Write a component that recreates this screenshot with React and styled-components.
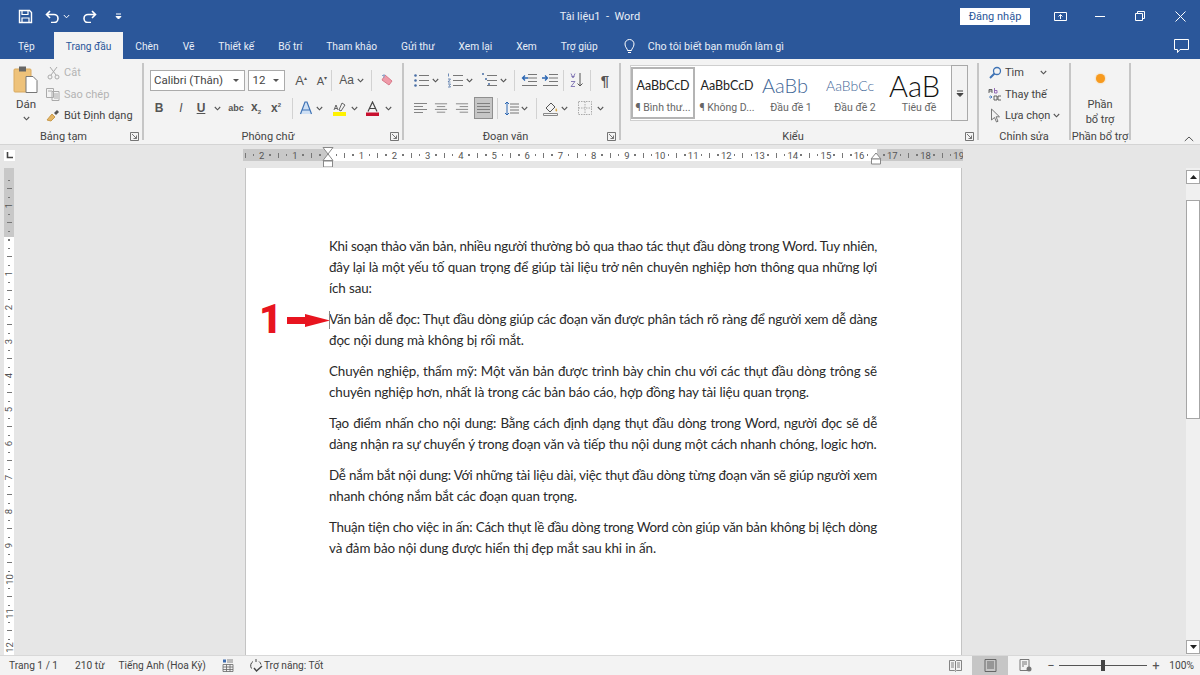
import React from "react";
import styled, { createGlobalStyle } from "styled-components";

const Global = createGlobalStyle`
    html, body {
        margin: 0;
        padding: 0;
        height: 100%;
        overflow: hidden;
    }
    #root {
        height: 100%;
    }
`;

const Screen = styled.div`
    width: 1200px;
    height: 675px;
    display: flex;
    flex-direction: column;
    background: #e6e6e6;
    font-family: "Roboto", "Noto Sans", sans-serif;
    color: #444;
    overflow: hidden;
`;

const TitleBar = styled.div`
    height: 32px;
    flex: none;
    display: grid;
    grid-template-columns: 1fr auto 1fr;
    align-items: center;
    background: #2b579a;
    color: #fff;
`;

const Quick = styled.div`
    display: flex;
    align-items: center;
    padding-left: 17px;
`;

const QuickBtn = styled.div`
    width: ${(p) => p.$w}px;
    margin-left: ${(p) => p.$ml || 0}px;
    display: flex;
    justify-content: center;
    align-items: center;
`;

const DocTitle = styled.div`
    font-size: 11px;
    color: #e8eef7;
`;

const WindowBar = styled.div`
    display: flex;
    align-items: center;
    justify-content: flex-end;
`;

const SignIn = styled.div`
    width: 70px;
    height: 17px;
    margin-right: 10px;
    background: #fff;
    color: #2b579a;
    font-size: 11px;
    line-height: 18px;
    text-align: center;
`;

const WinBtn = styled.div`
    width: 40px;
    display: flex;
    justify-content: center;
    align-items: center;
`;

const TabBar = styled.div`
    height: 27px;
    flex: none;
    display: flex;
    align-items: stretch;
    padding-left: 6px;
    background: #2b579a;
    color: #e8eef7;
    font-size: 10.2px;
`;

const Tab = styled.div`
    padding: 2px 12px 0;
    margin-right: ${(p) => p.$mr || 0}px;
    display: flex;
    align-items: center;
    ${(p) => p.$active && "background: #f3f3f3; color: #2b579a;"}
`;

const TellMe = styled.div`
    display: flex;
    align-items: center;
    gap: 12px;
    margin-left: 13px;
    padding-top: 1px;
    font-size: 10.7px;
`;

const CommentBtn = styled.div`
    margin-left: auto;
    margin-right: 11px;
    display: flex;
    align-items: center;
`;

const Ribbon = styled.div`
    height: 86px;
    flex: none;
    position: relative;
    box-sizing: border-box;
    display: flex;
    padding: 4px 0;
    background: #f3f3f3;
    border-bottom: 1px solid #d4d4d4;
    font-size: 11px;
`;

const Group = styled.div`
    width: ${(p) => p.$w}px;
    flex: none;
    position: relative;
    box-sizing: border-box;
    display: flex;
    flex-direction: column;
    border-right: 2px solid #c6c6c6;
`;

const GroupBody = styled.div`
    flex: 1;
    display: flex;
    flex-direction: ${(p) => (p.$row ? "row" : "column")};
    padding-top: ${(p) => p.$pt || 0}px;
    padding-left: ${(p) => p.$pl || 0}px;
    gap: ${(p) => p.$gap || 0}px;
`;

const GroupLabel = styled.div`
    height: 14px;
    margin-bottom: -4px;
    line-height: 14px;
    text-align: center;
    padding-right: ${(p) => p.$pr || 0}px;
    white-space: nowrap;
`;

const Launcher = styled.svg`
    position: absolute;
    right: 3px;
    bottom: -1px;
    width: 9px;
    height: 9px;
`;

const ToolRow = styled.div`
    height: 22px;
    display: flex;
    align-items: center;
`;

const Tool = styled.div`
    width: ${(p) => p.$w}px;
    margin-left: ${(p) => p.$ml || 0}px;
    flex: none;
    display: flex;
    align-items: center;
    justify-content: center;
    ${(p) => p.$on && "height: 22px; box-sizing: border-box; background: #c6c6c6; border: 1px solid #8f8f8f;"}
`;

const Sep = styled.div`
    width: 1px;
    height: 21px;
    margin-left: ${(p) => p.$ml || 0}px;
    background: #d2d2d2;
    flex: none;
`;

const Caret = styled.svg`
    width: 7px;
    height: 5px;
    flex: none;
`;

const FontBox = styled.div`
    width: ${(p) => p.$w}px;
    height: 21px;
    margin-left: ${(p) => p.$ml || 0}px;
    box-sizing: border-box;
    display: flex;
    align-items: center;
    justify-content: space-between;
    padding: 0 5px 0 3px;
    background: #fff;
    border: 1px solid #ababab;
    font-family: "Roboto", sans-serif;
    font-size: 11.5px;
`;

const SmallArrow = styled.div`
    width: 0;
    height: 0;
    border-left: 3px solid transparent;
    border-right: 3px solid transparent;
    border-top: 3px solid #555;
`;

const GlyphBtn = styled.span`
    font-family: "Liberation Sans", sans-serif;
    font-size: ${(p) => p.$size || 12}px;
    font-weight: ${(p) => (p.$bold ? 700 : 400)};
    font-style: ${(p) => (p.$italic ? "italic" : "normal")};
    text-decoration: ${(p) => (p.$under ? "underline" : "none")};
    color: #555;
    white-space: nowrap;
`;

const Sub = styled.sub`
    font-size: 6px;
`;

const Sup = styled.sup`
    font-size: 6px;
`;

const PasteCol = styled.div`
    width: 40px;
    margin-left: 6px;
    display: flex;
    flex-direction: column;
    align-items: center;
    padding-top: 2px;
    font-size: 11.5px;
`;

const PasteText = styled.div`
    margin-top: 3px;
    line-height: 14px;
`;

const PasteDown = styled.div`
    line-height: 10px;
    margin-top: 1px;
`;

const SmallCol = styled.div`
    display: flex;
    flex-direction: column;
    margin-top: -1px;
`;

const SmallItem = styled.div`
    height: 21.5px;
    display: flex;
    align-items: center;
    gap: ${(p) => p.$gap || 4}px;
    color: ${(p) => (p.$off ? "#b4b4b4" : "#444")};
    white-space: nowrap;
`;

const ItemIcon = styled.div`
    width: 14px;
    display: flex;
    justify-content: center;
    flex: none;
`;

const Gallery = styled.div`
    width: 338px;
    height: 56px;
    margin: 2px 0 0 9px;
    box-sizing: border-box;
    display: flex;
    background: #fff;
    border: 1px solid #cfcfcf;
`;

const StyleCard = styled.div`
    width: 64px;
    flex: none;
    box-sizing: border-box;
    display: flex;
    flex-direction: column;
    align-items: center;
    overflow: hidden;
    margin: 1px 0;
    border: 2px solid ${(p) => (p.$on ? "#b4b4b4" : "transparent")};
`;

const StylePreview = styled.div`
    height: 32px;
    width: 56px;
    position: relative;
    left: ${(p) => p.$shift || 0}px;
    display: flex;
    align-items: center;
    justify-content: ${(p) => (p.$left ? "flex-start" : "center")};
    font-family: "Lato", sans-serif;
    font-size: ${(p) => p.$size || 13}px;
    font-weight: ${(p) => (p.$thin ? 300 : 400)};
    color: ${(p) => p.$color || "#222"};
    white-space: nowrap;
`;

const StyleName = styled.div`
    font-size: 10.5px;
    line-height: 14px;
    color: #666;
    white-space: nowrap;
`;

const GalleryMore = styled.div`
    width: 21px;
    height: 56px;
    margin: -1px -1px -1px auto;
    box-sizing: border-box;
    display: flex;
    align-items: center;
    justify-content: center;
    background: #f3f3f3;
    border: 1px solid #a9a9a9;
`;

const AddinBody = styled.div`
    flex: 1;
    display: flex;
    flex-direction: column;
    align-items: center;
    padding-top: 11px;
    line-height: 14.5px;
    text-align: center;
`;

const OrangeDot = styled.div`
    width: 9px;
    height: 9px;
    margin-bottom: 15px;
    border-radius: 50%;
    background: #f79a1e;
    box-shadow: 0 0 2px #f9b85c;
`;

const Collapse = styled.svg`
    position: absolute;
    right: 6px;
    bottom: 2px;
    width: 10px;
    height: 6px;
`;

const RulerRow = styled.div`
    height: 23px;
    flex: none;
    position: relative;
    display: flex;
    padding-top: 4px;
    box-sizing: border-box;
`;

const Corner = styled.div`
    width: 11px;
    height: 11px;
    margin: 1px 0 0 4px;
    background: #fff;
    color: #444;
    display: flex;
    align-items: center;
    justify-content: center;
    flex: none;
`;

const HRuler = styled.div`
    width: 720px;
    height: 12px;
    margin-left: 228px;
    display: flex;
    overflow: hidden;
    background: linear-gradient(90deg, #c8c8c8 85px, #fff 85px, #fff 634px, #c8c8c8 634px);
`;

const HMark = styled.div`
    width: 8.3px;
    flex: none;
    display: flex;
    align-items: center;
    justify-content: center;
    font-family: "Roboto", sans-serif;
    font-size: 9.5px;
    color: #555;
    position: relative;
    left: -2px;
`;

const Dot = styled.span`
    width: 1.5px;
    height: 1.5px;
    background: #777;
`;

const Tick = styled.span`
    width: ${(p) => (p.$flat ? 5 : 1)}px;
    height: ${(p) => (p.$flat ? 1 : 5)}px;
    background: #777;
`;

const IndentMark = styled.svg`
    position: absolute;
    top: 2px;
    left: ${(p) => p.$x}px;
    width: 12px;
    height: 20px;
`;

const Workspace = styled.div`
    flex: 1;
    min-height: 0;
    display: flex;
`;

const VRuler = styled.div`
    width: 10px;
    margin-left: 4px;
    padding-top: 8px;
    flex: none;
    display: flex;
    flex-direction: column;
    overflow: hidden;
    background: linear-gradient(180deg, #c8c8c8 69px, #fff 69px);
`;

const VMark = styled.div`
    height: 8.5px;
    flex: none;
    display: flex;
    align-items: center;
    justify-content: center;
    font-family: "Roboto", sans-serif;
    font-size: 9.5px;
    color: #555;
`;

const VNum = styled.span`
    display: block;
    transform: rotate(-90deg);
`;

const Desk = styled.div`
    flex: 1;
    min-width: 0;
    padding-left: 231px;
`;

const Page = styled.div`
    width: 717px;
    height: 100%;
    position: relative;
    box-sizing: border-box;
    padding: 68px 0 0 83px;
    background: #fff;
    border-left: 1px solid #c4c4c4;
    border-right: 1px solid #c4c4c4;
    font-family: "Lato", sans-serif;
    font-size: 13.4px;
    color: #2a2a2a;
`;

const Para = styled.div`
    width: 548px;
    margin-bottom: 10.4px;
`;

const Line = styled.div`
    height: 20.8px;
    line-height: 20.8px;
    white-space: nowrap;
    letter-spacing: ${(p) => p.$ls}px;
    text-align: ${(p) => (p.$last ? "left" : "justify")};
    text-align-last: ${(p) => (p.$last ? "left" : "justify")};
`;

const BigOne = styled.div`
    position: absolute;
    left: 13px;
    top: 129px;
    font-family: "Roboto", sans-serif;
    font-size: 40px;
    line-height: 46px;
    font-weight: 900;
    color: #e8141f;
`;

const Arrow = styled.svg`
    position: absolute;
    left: 41px;
    top: 145px;
    width: 44px;
    height: 15px;
`;

const Cursor = styled.div`
    position: absolute;
    left: 83px;
    top: 143px;
    width: 1px;
    height: 18px;
    background: #888;
`;

const ScrollBar = styled.div`
    width: 14px;
    flex: none;
    display: flex;
    flex-direction: column;
    padding-top: 2px;
    box-sizing: border-box;
    background: #f0f0f0;
`;

const ScrollBtn = styled.div`
    height: 14px;
    flex: none;
    box-sizing: border-box;
    background: #fff;
    border: 1px solid #a6a6a6;
    display: flex;
    align-items: center;
    justify-content: center;
    margin-top: ${(p) => (p.$end ? "auto" : 0)};
    margin-bottom: ${(p) => (p.$end ? "1px" : 0)};
`;

const ScrollThumb = styled.div`
    height: 219px;
    margin-top: 16px;
    flex: none;
    box-sizing: border-box;
    background: #fff;
    border: 1px solid #a6a6a6;
`;

const StatusBar = styled.div`
    height: 20px;
    flex: none;
    display: flex;
    align-items: center;
    background: #f3f3f3;
    border-top: 1px solid #d8d8d8;
    box-sizing: border-box;
    font-size: 10.2px;
    padding: 0 6px 0 9px;
    white-space: nowrap;
`;

const StatusItem = styled.div`
    margin-left: ${(p) => (p.$auto ? "auto" : `${p.$ml || 0}px`)};
    display: flex;
    align-items: center;
`;

const ViewBtn = styled.div`
    width: 36px;
    height: 19px;
    margin-left: ${(p) => p.$ml || 0}px;
    display: flex;
    align-items: center;
    justify-content: center;
    ${(p) => p.$on && "background: #c6c6c6;"}
`;

const ZoomSign = styled.div`
    width: 7px;
    text-align: center;
    font-size: 13px;
    line-height: 13px;
    color: #555;
    margin-left: ${(p) => p.$ml || 0}px;
`;

const ZoomTrack = styled.div`
    width: 88px;
    height: 1px;
    margin-left: 5px;
    position: relative;
    background: #555;
`;

const ZoomThumb = styled.div`
    position: absolute;
    left: 42px;
    top: -5px;
    width: 4px;
    height: 11px;
    background: #444;
`;

const Down = () => (
    <Caret viewBox="0 0 7 5">
        <path d="M.8 1 3.5 3.8 6.2 1" fill="none" stroke="#555" strokeWidth="1.1" />
    </Caret>
);

const Ico = ({ w = 16, h = 16, c = "#555", children }) => (
    <svg width={w} height={h} viewBox={`0 0 ${w} ${h}`} fill="none" stroke={c} strokeWidth="1">
        {children}
    </svg>
);

const Launch = () => (
    <Launcher viewBox="0 0 9 9">
        <path d="M.5.5h8v8h-8zM2 2l4.5 4.5M6.5 3.5v3h-3" fill="none" stroke="#666" strokeWidth=".9" />
    </Launcher>
);

const ListIcon = ({ kind }) => (
    <Ico w={17} h={16}>
        {[3, 8, 13].map((y) => (
            <path key={y} d={`M6 ${y}.5h10`} stroke="#777" />
        ))}
        {kind === "bullet" && [3, 8, 13].map((y) => <circle key={y} cx="2.5" cy={y + 0.5} r="1.3" fill="#4a6fa5" stroke="none" />)}
        {kind === "num" && <path d="M1.5 1.5v3M1 7h2.5L1 10h2.5M1 12h2.5l-1 1.5 1 1.5H1" stroke="#4a6fa5" strokeWidth=".8" />}
        {kind === "multi" && <path d="M1 2h2M4 7h2M7 12h2" stroke="#4a6fa5" strokeWidth="1.4" />}
    </Ico>
);

const IndentIcon = ({ dir }) => (
    <Ico w={16} h={14}>
        <path d="M7 1.5h9M7 5h9M7 8.5h9M1 12.5h15" stroke="#777" />
        <path d={dir === "out" ? "M7 5H1.5M4 2.5 1.5 5 4 7.5" : "M0 5h5.5M3 2.5 5.5 5 3 7.5"} stroke="#2a66b3" strokeWidth="1.3" />
    </Ico>
);

const AlignIcon = ({ lines }) => (
    <Ico w={15} h={12}>
        {lines.map(([a, b], i) => (
            <path key={i} d={`M${a} ${i * 3 + 1.5}H${b}`} stroke="#777" strokeWidth=".9" />
        ))}
    </Ico>
);

const rulerMarks = () => {
    const marks = [];
    for (let k = -10; k <= 76; k++) {
        marks.push(k);
    }
    return marks;
};

const markContent = (k, vertical) => {
    const m = ((k % 4) + 4) % 4;
    if (m === 0) {
        const n = Math.abs(k / 4);
        if (n === 0) return <Dot />;
        return vertical ? <VNum>{n}</VNum> : n;
    }
    if (m === 2) return <Tick $flat={vertical} />;
    return <Dot />;
};

const paragraphs = [
    [
        ["Khi soạn thảo văn bản, nhiều người thường bỏ qua thao tác thụt đầu dòng trong Word. Tuy nhiên,", -0.25],
        ["đây lại là một yếu tố quan trọng để giúp tài liệu trở nên chuyên nghiệp hơn thông qua những lợi", -0.14],
        ["ích sau:", -0.12],
    ],
    [
        ["Văn bản dễ đọc: Thụt đầu dòng giúp các đoạn văn được phân tách rõ ràng để người xem dễ dàng", -0.19],
        ["đọc nội dung mà không bị rối mắt.", -0.12],
    ],
    [
        ["Chuyên nghiệp, thẩm mỹ: Một văn bản được trình bày chỉn chu với các thụt đầu dòng trông sẽ", -0.12],
        ["chuyên nghiệp hơn, nhất là trong các bản báo cáo, hợp đồng hay tài liệu quan trọng.", -0.12],
    ],
    [
        ["Tạo điểm nhấn cho nội dung: Bằng cách định dạng thụt đầu dòng trong Word, người đọc sẽ dễ", -0.22],
        ["dàng nhận ra sự chuyển ý trong đoạn văn và tiếp thu nội dung một cách nhanh chóng, logic hơn.", -0.14],
    ],
    [
        ["Dễ nắm bắt nội dung: Với những tài liệu dài, việc thụt đầu dòng từng đoạn văn sẽ giúp người xem", -0.22],
        ["nhanh chóng nắm bắt các đoạn quan trọng.", -0.12],
    ],
    [
        ["Thuận tiện cho việc in ấn: Cách thụt lề đầu dòng trong Word còn giúp văn bản không bị lệch dòng", -0.25],
        ["và đảm bảo nội dung được hiển thị đẹp mắt sau khi in ấn.", -0.12],
    ],
];

const tabs = ["Chèn", "Vẽ", "Thiết kế", "Bố trí", "Tham khảo", "Gửi thư", "Xem lại", "Xem", "Trợ giúp"];

const styleCards = [
    { name: "¶ Bình thư...", text: "AaBbCcD", size: 12.5, on: true },
    { name: "¶ Không D...", text: "AaBbCcD", size: 12.5 },
    { name: "Đầu đề 1", text: "AaBb", size: 20, color: "#3f6797", left: true, thin: true, shift: -1 },
    { name: "Đầu đề 2", text: "AaBbCc", size: 14, color: "#3f6797", left: true, thin: true, shift: -1 },
    { name: "Tiêu đề", text: "AaB", size: 29, color: "#111", left: true, thin: true, shift: -2 },
];

const App = () => {
    return (
        <Screen>
            <Global />
            <TitleBar>
                <Quick>
                    <QuickBtn $w={16}>
                        <Ico w={15} h={15} c="#fff">
                            <path d="M1.5 1.5h10l2 2v10h-12z" strokeWidth="1.4" />
                            <path d="M4 1.5v4h6v-4M4 13.5V9h7v4.5" strokeWidth="1.2" />
                        </Ico>
                    </QuickBtn>
                    <QuickBtn $w={18} $ml={10}>
                        <Ico w={15} h={13} c="#fff">
                            <path d="M5 1 1.5 4.5 5 8M1.5 4.5H9a4 4 0 0 1 0 8H6" strokeWidth="1.6" />
                        </Ico>
                    </QuickBtn>
                    <QuickBtn $w={10}>
                        <Caret viewBox="0 0 7 5">
                            <path d="M.8 1 3.5 3.8 6.2 1" fill="none" stroke="#fff" />
                        </Caret>
                    </QuickBtn>
                    <QuickBtn $w={16} $ml={10}>
                        <Ico w={15} h={13} c="#fff">
                            <path d="M10 1l3.5 3.5L10 8M13.5 4.5H6a4 4 0 0 0 0 8h3" strokeWidth="1.6" />
                        </Ico>
                    </QuickBtn>
                    <QuickBtn $w={8} $ml={17}>
                        <Ico w={7} h={7} c="#fff">
                            <path d="M1 1h5M1 3.5h5L3.5 6z" fill="#fff" />
                        </Ico>
                    </QuickBtn>
                </Quick>
                <DocTitle>Tài liệu1 &nbsp;-&nbsp; Word</DocTitle>
                <WindowBar>
                    <SignIn>Đăng nhập</SignIn>
                    <WinBtn>
                        <Ico w={13} h={11} c="#fff">
                            <path d="M.5 1.5h12v8H.5z" />
                            <path d="M6.5 8V4M4.5 5.5l2-2 2 2" />
                        </Ico>
                    </WinBtn>
                    <WinBtn>
                        <Ico w={10} h={10} c="#fff">
                            <path d="M0 5.5h10" />
                        </Ico>
                    </WinBtn>
                    <WinBtn>
                        <Ico w={10} h={10} c="#fff">
                            <path d="M.5 2.5h7v7h-7zM2.5 2.5v-2h7v7h-2" />
                        </Ico>
                    </WinBtn>
                    <WinBtn>
                        <Ico w={11} h={11} c="#fff">
                            <path d="M.5.5l10 10M10.5.5l-10 10" />
                        </Ico>
                    </WinBtn>
                </WindowBar>
            </TitleBar>

            <TabBar>
                <Tab $mr={7}>Tệp</Tab>
                <Tab $active>Trang đầu</Tab>
                {tabs.map((t) => (
                    <Tab key={t}>{t}</Tab>
                ))}
                <TellMe>
                    <Ico w={13} h={16} c="#fff">
                        <path d="M4.5 12.5c0-2-2.5-3-2.5-6.5a4.5 4.5 0 0 1 9 0c0 3.5-2.5 4.5-2.5 6.5zM5 14.5h3" />
                    </Ico>
                    Cho tôi biết bạn muốn làm gì
                </TellMe>
                <CommentBtn>
                    <Ico w={15} h={15} c="#fff">
                        <path d="M.5 1.5h14v10H6l-2.5 3v-3h-3z" />
                    </Ico>
                </CommentBtn>
            </TabBar>

            <Ribbon>
                <Group $w={144}>
                    <GroupBody $row>
                        <PasteCol>
                            <Ico w={26} h={29} c="#777">
                                <rect x="1" y="4" width="17" height="23" rx="1" fill="#eec27a" stroke="#d9aa60" />
                                <rect x="6" y="1.5" width="7" height="5" fill="#666" stroke="none" />
                                <path d="M13 11.5h7l4 4v12H13z" fill="#fff" stroke="#777" />
                            </Ico>
                            <PasteText>Dán</PasteText>
                            <PasteDown>
                                <Down />
                            </PasteDown>
                        </PasteCol>
                        <SmallCol>
                            <SmallItem $off>
                                <ItemIcon>
                                    <Ico w={13} h={14} c="#aaa">
                                        <path d="M3 1l6 8M10 1 4 9" />
                                        <circle cx="3" cy="11" r="2" />
                                        <circle cx="10" cy="11" r="2" />
                                    </Ico>
                                </ItemIcon>
                                Cắt
                            </SmallItem>
                            <SmallItem $off>
                                <ItemIcon>
                                    <Ico w={14} h={13} c="#aaa">
                                        <path d="M.5.5h7v9h-7zM6 3.5h7v9H6zM2 3h4M8 6h4M8 8h4M8 10h4" />
                                    </Ico>
                                </ItemIcon>
                                Sao chép
                            </SmallItem>
                            <SmallItem>
                                <ItemIcon>
                                    <Ico w={14} h={13}>
                                        <path d="M1 11 6 5l3 3-4 4z" fill="#e3b566" stroke="#c99a4a" />
                                        <path d="M8 4l3-3 2 2-3 3z" fill="#555" stroke="none" />
                                    </Ico>
                                </ItemIcon>
                                Bút Định dạng
                            </SmallItem>
                        </SmallCol>
                    </GroupBody>
                    <GroupLabel $pr={15}>Bảng tạm</GroupLabel>
                    <Launch />
                </Group>

                <Group $w={260}>
                    <GroupBody $pt={6} $pl={6} $gap={6}>
                        <ToolRow>
                            <FontBox $w={97}>
                                Calibri (Thân)
                                <SmallArrow />
                            </FontBox>
                            <FontBox $w={37} $ml={3}>
                                12
                                <SmallArrow />
                            </FontBox>
                            <Tool $w={24} $ml={4}>
                                <GlyphBtn $size={13}>A<Sup>▴</Sup></GlyphBtn>
                            </Tool>
                            <Tool $w={18}>
                                <GlyphBtn $size={11}>A<Sup>▾</Sup></GlyphBtn>
                            </Tool>
                            <Sep />
                            <Tool $w={39}>
                                <GlyphBtn $size={12}>Aa</GlyphBtn>
                                &nbsp;
                                <Down />
                            </Tool>
                            <Sep />
                            <Tool $w={30}>
                                <Ico w={14} h={14}>
                                    <path d="M5 2 12 8l-3 4-7-5z" fill="#ef9aa8" stroke="#d87a8a" />
                                    <path d="M4 1v4M2 2.5h3" stroke="#8fa6c9" />
                                </Ico>
                            </Tool>
                        </ToolRow>
                        <ToolRow>
                            <Tool $w={18}><GlyphBtn $bold>B</GlyphBtn></Tool>
                            <Tool $w={18} $ml={4}><GlyphBtn $italic>I</GlyphBtn></Tool>
                            <Tool $w={18} $ml={2}><GlyphBtn $under $bold>U</GlyphBtn></Tool>
                            <Tool $w={10} $ml={2}><Down /></Tool>
                            <Tool $w={20} $ml={4}><GlyphBtn $size={9} $bold>abc</GlyphBtn></Tool>
                            <Tool $w={20}><GlyphBtn $bold>x<Sub>2</Sub></GlyphBtn></Tool>
                            <Tool $w={20}><GlyphBtn $bold>x<Sup>2</Sup></GlyphBtn></Tool>
                            <Sep $ml={6} />
                            <Tool $w={16} $ml={5}>
                                <Ico w={14} h={14} c="#3f73b5">
                                    <path d="M1.5 13 6 1h2l4.5 12M3.5 9h7" fill="#cfe0f4" strokeWidth="1.2" />
                                </Ico>
                            </Tool>
                            <Tool $w={10}><Down /></Tool>
                            <Tool $w={18} $ml={6}>
                                <Ico w={15} h={15}>
                                    <path d="M2 9 4 4l2 5M3 7.5h2M10 2l3 2-4 6-2-1z" strokeWidth=".9" />
                                    <rect x="1" y="11" width="13" height="4" fill="#fff200" stroke="none" />
                                </Ico>
                            </Tool>
                            <Tool $w={10} $ml={1}><Down /></Tool>
                            <Tool $w={18} $ml={4}>
                                <Ico w={15} h={15} c="#444">
                                    <path d="M3 10.5 7.5 1l4.5 9.5M4.5 7.5h6" strokeWidth="1.2" />
                                    <rect x="1" y="11.5" width="13" height="3.5" fill="#c8102e" stroke="none" />
                                </Ico>
                            </Tool>
                            <Tool $w={10} $ml={2}><Down /></Tool>
                        </ToolRow>
                    </GroupBody>
                    <GroupLabel $pr={10}>Phông chữ</GroupLabel>
                    <Launch />
                </Group>

                <Group $w={217}>
                    <GroupBody $pt={6} $pl={8} $gap={6}>
                        <ToolRow>
                            <Tool $w={18}><ListIcon kind="bullet" /></Tool>
                            <Tool $w={10}><Down /></Tool>
                            <Tool $w={18} $ml={6}><ListIcon kind="num" /></Tool>
                            <Tool $w={10}><Down /></Tool>
                            <Tool $w={18} $ml={6}><ListIcon kind="multi" /></Tool>
                            <Tool $w={10}><Down /></Tool>
                            <Sep $ml={6} />
                            <Tool $w={16} $ml={6}><IndentIcon dir="out" /></Tool>
                            <Tool $w={16} $ml={5}><IndentIcon dir="in" /></Tool>
                            <Sep $ml={5} />
                            <Tool $w={14} $ml={6}>
                                <Ico w={14} h={16}>
                                    <path d="M1 1.5 3 6l2-4.5M1.5 4.5h3M1 9.5h4l-4 5h4" stroke="#7a6fb0" strokeWidth=".9" />
                                    <path d="M10 1v13M7.5 11.5 10 14l2.5-2.5" stroke="#555" />
                                </Ico>
                            </Tool>
                            <Sep $ml={6} />
                            <Tool $w={18} $ml={5}>
                                <GlyphBtn $size={15} $bold>¶</GlyphBtn>
                            </Tool>
                        </ToolRow>
                        <ToolRow>
                            <Tool $w={16}><AlignIcon lines={[[1, 14], [1, 10], [1, 14], [1, 10]]} /></Tool>
                            <Tool $w={14} $ml={6}><AlignIcon lines={[[1, 14], [3, 12], [1, 14], [3, 12]]} /></Tool>
                            <Tool $w={14} $ml={7}><AlignIcon lines={[[1, 14], [5, 14], [1, 14], [5, 14]]} /></Tool>
                            <Tool $w={19} $ml={5} $on><AlignIcon lines={[[1, 14], [1, 14], [1, 14], [1, 14]]} /></Tool>
                            <Sep $ml={4} />
                            <Tool $w={15} $ml={6}>
                                <Ico w={15} h={15}>
                                    <path d="M6 3h9M6 6h9M6 9h9M6 12h9" stroke="#777" />
                                    <path d="M3 1v13M1 3l2-2 2 2M1 12l2 2 2-2" stroke="#2a66b3" />
                                </Ico>
                            </Tool>
                            <Tool $w={10}><Down /></Tool>
                            <Sep $ml={7} />
                            <Tool $w={16} $ml={6}>
                                <Ico w={16} h={16}>
                                    <path d="M3 8 8 3l4 4-5 5z" />
                                    <path d="M13 8c1.5 2 1.5 3 .5 3.5S12 10 13 8z" fill="#d9a441" stroke="none" />
                                    <path d="M.5 13.5h14v2H.5z" stroke="#888" />
                                </Ico>
                            </Tool>
                            <Tool $w={10}><Down /></Tool>
                            <Tool $w={14} $ml={9}>
                                <Ico w={14} h={14} c="#aaa">
                                    <path d="M.5.5h13v13H.5zM7 .5v13M.5 7h13" strokeDasharray="1.5 1" />
                                </Ico>
                            </Tool>
                            <Tool $w={10} $ml={3}><Down /></Tool>
                        </ToolRow>
                    </GroupBody>
                    <GroupLabel $pr={12}>Đoạn văn</GroupLabel>
                    <Launch />
                </Group>

                <Group $w={358}>
                    <GroupBody>
                        <Gallery>
                            {styleCards.map((s) => (
                                <StyleCard key={s.name} $on={s.on}>
                                    <StylePreview $size={s.size} $color={s.color} $left={s.left} $thin={s.thin} $shift={s.shift}>
                                        {s.text}
                                    </StylePreview>
                                    <StyleName>{s.name}</StyleName>
                                </StyleCard>
                            ))}
                            <GalleryMore>
                                <Ico w={8} h={7} c="#444">
                                    <path d="M1 1h6M1 3.5h6L4 6.5z" fill="#444" />
                                </Ico>
                            </GalleryMore>
                        </Gallery>
                    </GroupBody>
                    <GroupLabel $pr={12}>Kiểu</GroupLabel>
                    <Launch />
                </Group>

                <Group $w={92}>
                    <GroupBody $pl={9}>
                        <SmallCol>
                            <SmallItem $gap={3}>
                                <ItemIcon>
                                    <Ico w={13} h={13} c="#3f73b5">
                                        <circle cx="8" cy="5" r="3.5" strokeWidth="1.3" />
                                        <path d="M5.5 7.5 1 12" strokeWidth="2" />
                                    </Ico>
                                </ItemIcon>
                                Tìm
                                <Tool $w={10} $ml={12}><Down /></Tool>
                            </SmallItem>
                            <SmallItem $gap={3}>
                                <ItemIcon>
                                    <Ico w={14} h={14}>
                                        <path d="M1 6V2.5h3V6M1 4h3" stroke="#555" strokeWidth=".9" />
                                        <path d="M6.5 1v5H9V3.5H6.5" stroke="#8a5fb0" strokeWidth=".9" />
                                        <path d="M1 10h3M2.5 8.5 4 10l-1.5 1.5" stroke="#3f73b5" strokeWidth=".9" />
                                        <path d="M6 9h3v4H6zM13 9h-3v4h3" stroke="#555" strokeWidth=".9" />
                                    </Ico>
                                </ItemIcon>
                                Thay thế
                            </SmallItem>
                            <SmallItem $gap={3}>
                                <ItemIcon>
                                    <Ico w={11} h={15} c="#777">
                                        <path d="M1.5 1v11l3-2.5 2 4.5 1.5-.7-2-4.5h3.5z" />
                                    </Ico>
                                </ItemIcon>
                                Lựa chọn
                                <Down />
                            </SmallItem>
                        </SmallCol>
                    </GroupBody>
                    <GroupLabel>Chỉnh sửa</GroupLabel>
                </Group>

                <Group $w={60}>
                    <AddinBody>
                        <OrangeDot />
                        Phần
                        <br />
                        bổ trợ
                    </AddinBody>
                    <GroupLabel>Phần bổ trợ</GroupLabel>
                </Group>

                <Collapse viewBox="0 0 10 6">
                    <path d="M.8 5 5 1l4.2 4" fill="none" stroke="#555" />
                </Collapse>
            </Ribbon>

            <RulerRow>
                <Corner>
                    <Ico w={7} h={7} c="#444">
                        <path d="M1.5 0v5.5H7" strokeWidth="1.6" />
                    </Ico>
                </Corner>
                <HRuler>
                    {rulerMarks().map((k) => (
                        <HMark key={k}>{markContent(k, false)}</HMark>
                    ))}
                </HRuler>
                <IndentMark $x={322} viewBox="0 0 12 20">
                    <path d="M1 .5h10L6 7zM6 7l5 6.5H1z" fill="#fff" stroke="#888" />
                    <path d="M1.5 14h9v6h-9z" fill="#fff" stroke="#888" />
                </IndentMark>
                <IndentMark $x={870} viewBox="0 0 12 20">
                    <path d="M6 6l5 6H1z" fill="#fff" stroke="#888" />
                    <path d="M1.5 12h9v5h-9z" fill="#fff" stroke="#888" />
                </IndentMark>
            </RulerRow>

            <Workspace>
                <VRuler>
                    {Array.from({ length: 58 }, (_, i) => i - 7).map((k) => (
                        <VMark key={k}>{markContent(k, true)}</VMark>
                    ))}
                </VRuler>
                <Desk>
                    <Page>
                        {paragraphs.map((lines, i) => (
                            <Para key={i}>
                                {lines.map(([text, ls], j) => (
                                    <Line key={j} $ls={ls} $last={j === lines.length - 1}>
                                        {text}
                                    </Line>
                                ))}
                            </Para>
                        ))}
                        <BigOne>1</BigOne>
                        <Arrow viewBox="0 0 44 15">
                            <path d="M0 4h18V1l25 6.5L18 14v-3H0z" fill="#e8141f" />
                        </Arrow>
                        <Cursor />
                    </Page>
                </Desk>
                <ScrollBar>
                    <ScrollBtn>
                        <Ico w={7} h={4} c="#222">
                            <path d="M3.5 0 7 4H0z" fill="#222" stroke="none" />
                        </Ico>
                    </ScrollBtn>
                    <ScrollThumb />
                    <ScrollBtn $end>
                        <Ico w={7} h={4} c="#222">
                            <path d="M3.5 4 7 0H0z" fill="#222" stroke="none" />
                        </Ico>
                    </ScrollBtn>
                </ScrollBar>
            </Workspace>

            <StatusBar>
                <StatusItem>Trang 1 / 1</StatusItem>
                <StatusItem $ml={17}>210 từ</StatusItem>
                <StatusItem $ml={14}>Tiếng Anh (Hoa Kỳ)</StatusItem>
                <StatusItem $ml={16}>
                    <Ico w={12} h={13} c="#666">
                        <path d="M1 .5h3v3H1z" fill="#3d6db0" stroke="none" />
                        <path d="M5 1h6M5 3h6M1 5.5h10v7H1zM1 8h10M1 10.5h10M4.5 5.5v7M8 5.5v7" strokeWidth=".8" />
                    </Ico>
                </StatusItem>
                <StatusItem $ml={15}>
                    <Ico w={15} h={15} c="#444">
                        <path d="M7 1v3M4 3.5a5 5 0 0 0-1.5 7M10 3.5a5 5 0 0 1 2 3" strokeWidth="1" />
                        <path d="M5 10l2.5 3L13 8" strokeWidth="1.4" />
                    </Ico>
                    Trợ năng: Tốt
                </StatusItem>
                <StatusItem $auto>
                    <Ico w={13} h={13} c="#777">
                        <path d="M.5 1.5h5l1 1 1-1h5v10h-5l-1 1-1-1h-5zM6.5 2.5v9M2 4h3M2 6h3M2 8h3M8 4h3M8 6h3M8 8h3" strokeWidth=".9" />
                    </Ico>
                </StatusItem>
                <ViewBtn $ml={10} $on>
                    <Ico w={13} h={13} c="#666">
                        <path d="M1 .5h11v12H1zM3 3h7M3 5h7M3 7h7M3 9h7" />
                    </Ico>
                </ViewBtn>
                <StatusItem $ml={11}>
                    <Ico w={13} h={13} c="#777">
                        <path d="M1 .5h9v11H1zM3 3h5M3 5h5M3 7h2" />
                        <circle cx="10" cy="10" r="2.5" fill="#777" stroke="none" />
                    </Ico>
                </StatusItem>
                <ZoomSign $ml={15}>−</ZoomSign>
                <ZoomTrack>
                    <ZoomThumb />
                </ZoomTrack>
                <ZoomSign $ml={5}>+</ZoomSign>
                <StatusItem $ml={10}>100%</StatusItem>
            </StatusBar>
        </Screen>
    );
};

export default App;
